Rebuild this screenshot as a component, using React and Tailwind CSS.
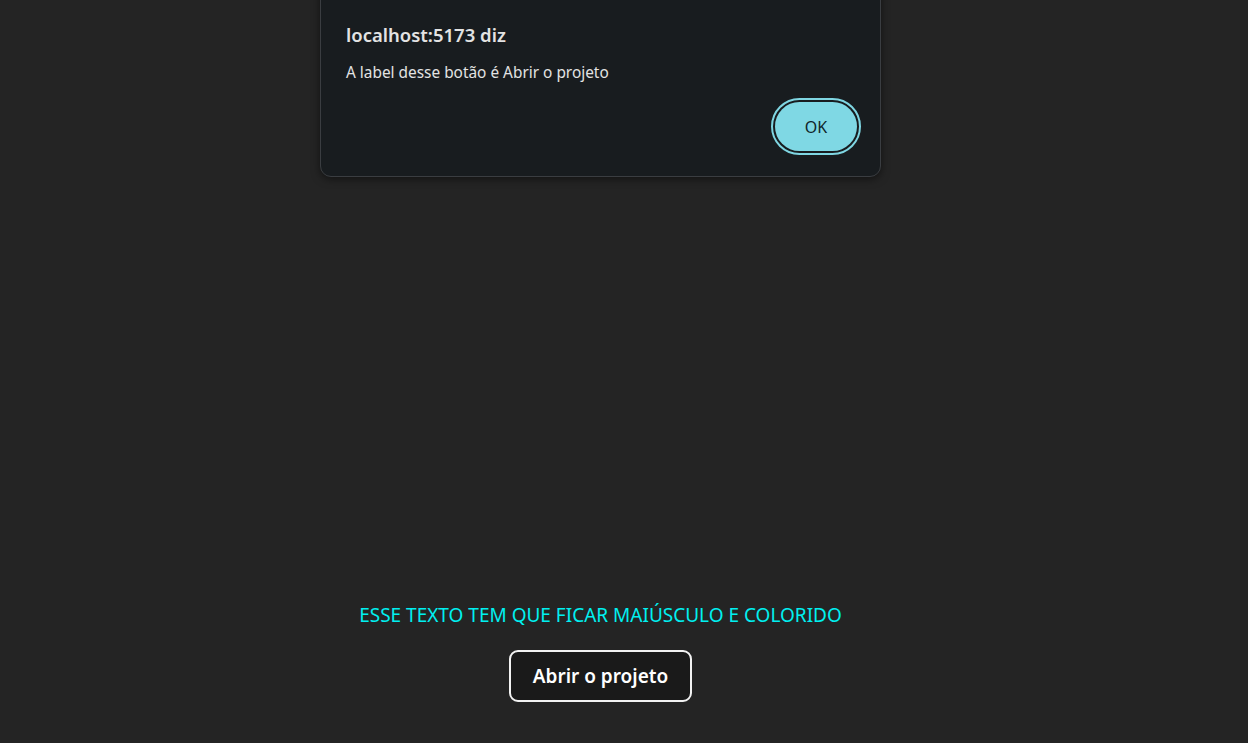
export default function App() {
  return (
    <div className="relative w-full h-[743px] bg-[#242424] overflow-hidden" style={{ fontFamily: '"Noto Sans", "Open Sans", sans-serif' }}>
      <div className="w-[1201px] flex flex-col items-center pt-[602px]">
        <p className="text-[19px] leading-[26px] text-[#00f0f0] uppercase">Esse texto tem que ficar maiúsculo e colorido</p>
        <button className="mt-[22px] w-[183px] h-[52px] rounded-[9px] border-2 border-[#f2f2f2] bg-[#1a1a1a] text-white text-[19px] font-semibold">
          Abrir o projeto
        </button>
      </div>
      <div className="absolute left-[320px] top-[-20px] w-[561px] h-[197px] rounded-[11px] border border-[#3a3d41] bg-[#181c1f] shadow-[0_2px_8px_rgba(0,0,0,0.5)]">
        <div className="pt-[41px] pl-[25px] pr-[19px]">
          <div className="text-[18.5px] leading-[26px] font-semibold text-[#e3e3e3]">localhost:5173 diz</div>
          <div className="mt-[15px] text-[15.4px] leading-[20px] text-[#e3e3e3]">A label desse botão é Abrir o projeto</div>
          <div className="flex justify-end mt-[15px]">
            <span className="rounded-full border-2 border-[#7fd6e2] p-[2px] bg-[#181c1f]">
              <span className="flex items-center justify-center w-[82px] h-[49px] rounded-full bg-[#7fd8e4] text-[16px] text-[#10262b]">OK</span>
            </span>
          </div>
        </div>
      </div>
    </div>
  );
}
